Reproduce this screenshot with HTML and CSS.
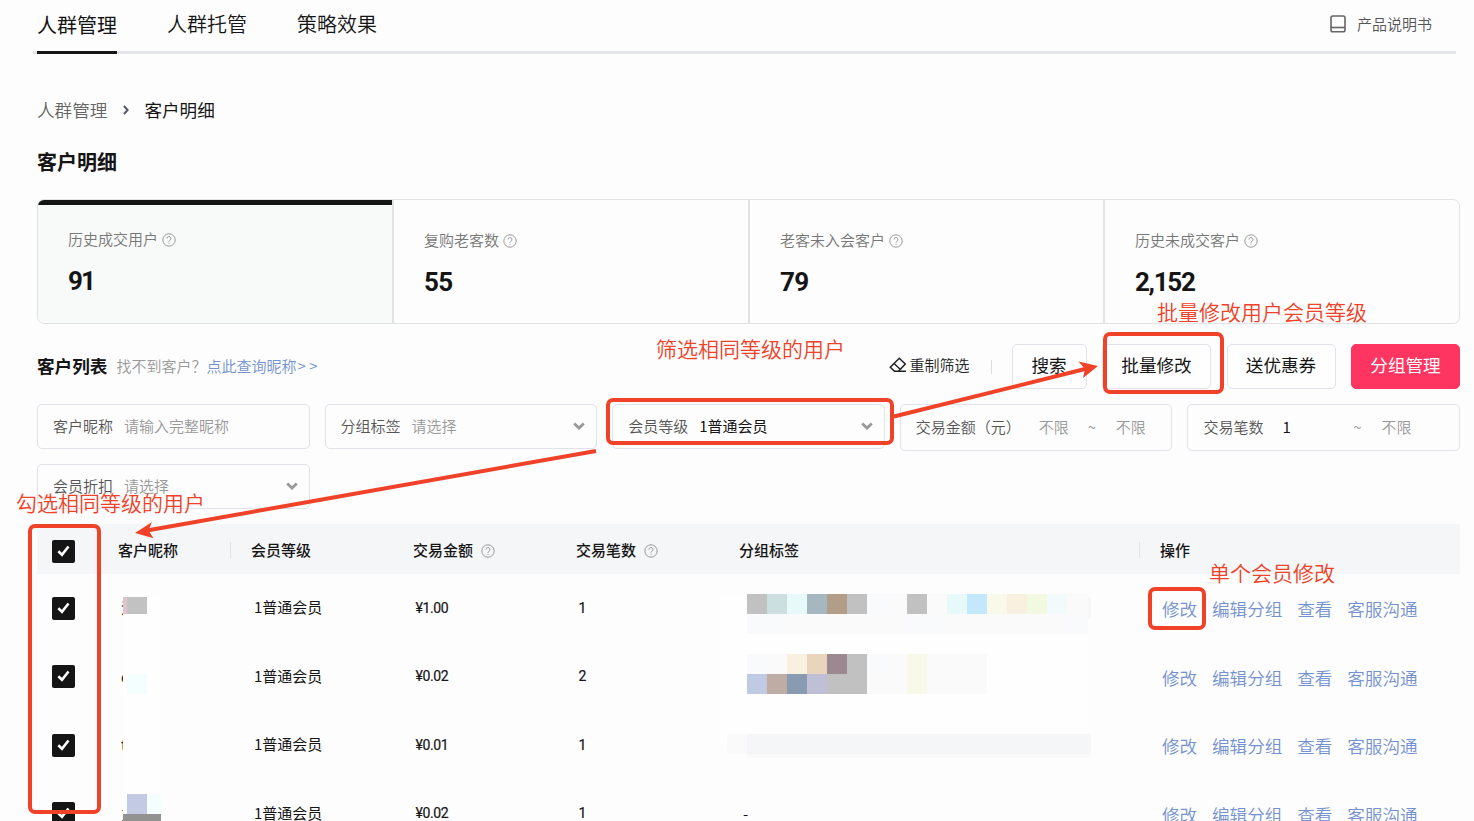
FILE: index.html
```html
<!DOCTYPE html>
<html lang="zh-CN">
<head>
<meta charset="utf-8">
<title>客户明细</title>
<link rel="stylesheet" href="styles.css">
</head>
<body>
<svg class="defs" width="0" height="0">
  <symbol id="help" viewBox="0 0 14 14"><circle cx="7" cy="7" r="6.2" fill="none" stroke="#999" stroke-width="1"/><path d="M5 5.6a2 2 0 1 1 2.9 1.7c-.6.4-.9.7-.9 1.3" fill="none" stroke="#999" stroke-width="1"/><path d="M6.5 9.7h1v1h-1z" fill="#999"/></symbol>
  <symbol id="down" viewBox="0 0 12 8"><path d="M1.2 1.4 6 6l4.800-4.600" fill="none" stroke="#999" stroke-width="2.800"/></symbol>
  <symbol id="tick" viewBox="0 0 23 23"><path d="M6.300 11.300l3.700 3.500 6.500-8.300" fill="none" stroke="#fff" stroke-width="2.600"/></symbol>
</svg>
<main class="page">
  <header class="tabs">
    <nav class="tab-list">
      <a class="tab active">人群管理</a>
      <a class="tab">人群托管</a>
      <a class="tab">策略效果</a>
    </nav>
    <a class="manual">
      <svg width="16" height="18" viewBox="0 0 16 18" fill="none" stroke="#666" stroke-width="1.600"><rect x="1" y="1" width="14" height="15.800" rx="1.800"/><path d="M1 12.500h14"/></svg>
      产品说明书
    </a>
  </header>

  <div class="crumbs">
    <span class="crumb-parent">人群管理</span>
    <svg width="6" height="10" viewBox="0 0 6 10"><path d="M1 1l3.600 4L1 9" fill="none" stroke="#555b66" stroke-width="2"/></svg>
    <span>客户明细</span>
  </div>
  <h1 class="title">客户明细</h1>

  <section class="stats">
    <div class="stat active"><div class="stat-label">历史成交用户<svg class="help"><use href="#help"/></svg></div><div class="stat-value">91</div></div>
    <div class="stat"><div class="stat-label">复购老客数<svg class="help"><use href="#help"/></svg></div><div class="stat-value">55</div></div>
    <div class="stat"><div class="stat-label">老客未入会客户<svg class="help"><use href="#help"/></svg></div><div class="stat-value">79</div></div>
    <div class="stat"><div class="stat-label">历史未成交客户<svg class="help"><use href="#help"/></svg></div><div class="stat-value">2,152</div></div>
  </section>

  <section class="toolbar">
    <h2 class="list-title">客户列表</h2>
    <span class="hint">找不到客户？<a class="link">点此查询昵称<span class="more">&gt;&gt;</span></a></span>
    <a class="reset">
      <svg width="18" height="16" viewBox="0 0 18 16" fill="none" stroke="#222" stroke-width="1.500"><path d="M10.300 1.300 16.300 7 9.500 14.300H5.500L1.300 10.200z"/><path d="M5 6.500l6.500 6M9 14.300h8"/></svg>
      重制筛选
    </a>
    <span class="sep"></span>
    <button class="btn btn-search">搜索</button>
    <button class="btn">批量修改</button>
    <button class="btn">送优惠券</button>
    <button class="btn primary">分组管理</button>
  </section>

  <section class="filters">
    <div class="field"><span class="name">客户昵称</span><span class="ph">请输入完整昵称</span></div>
    <div class="field"><span class="name">分组标签</span><span class="ph">请选择</span><svg class="down"><use href="#down"/></svg></div>
    <div class="field"><span class="name">会员等级</span><span class="val">1普通会员</span><svg class="down"><use href="#down"/></svg></div>
    <div class="field range amount"><span class="name">交易金额（元）</span><span class="ph from">不限</span><span class="tilde">~</span><span class="ph">不限</span></div>
    <div class="field range count"><span class="name">交易笔数</span><span class="val from">1</span><span class="tilde">~</span><span class="ph">不限</span></div>
    <div class="field"><span class="name">会员折扣</span><span class="ph">请选择</span><svg class="down"><use href="#down"/></svg></div>
  </section>

  <section class="table">
    <div class="row head">
      <div class="check"><svg class="box"><use href="#tick"/></svg></div>
      <div class="divided">客户昵称</div>
      <div>会员等级</div>
      <div>交易金额<svg class="help"><use href="#help"/></svg></div>
      <div>交易笔数<svg class="help"><use href="#help"/></svg></div>
      <div class="divided tags">分组标签</div>
      <div>操作</div>
    </div>
    <div class="row">
      <div class="check"><svg class="box"><use href="#tick"/></svg></div>
      <div class="nick"><span>潘</span></div><div class="level">1普通会员</div><div class="num">¥1.00</div><div class="num">1</div><div></div>
      <div class="ops"><a>修改</a><a>编辑分组</a><a>查看</a><a>客服沟通</a></div>
    </div>
    <div class="row">
      <div class="check"><svg class="box"><use href="#tick"/></svg></div>
      <div class="nick"><span>e</span></div><div class="level">1普通会员</div><div class="num">¥0.02</div><div class="num">2</div><div></div>
      <div class="ops"><a>修改</a><a>编辑分组</a><a>查看</a><a>客服沟通</a></div>
    </div>
    <div class="row">
      <div class="check"><svg class="box"><use href="#tick"/></svg></div>
      <div class="nick"><span>t</span></div><div class="level">1普通会员</div><div class="num">¥0.01</div><div class="num">1</div><div></div>
      <div class="ops"><a>修改</a><a>编辑分组</a><a>查看</a><a>客服沟通</a></div>
    </div>
    <div class="row">
      <div class="check"><svg class="box"><use href="#tick"/></svg></div>
      <div class="nick"><span>之</span></div><div class="level">1普通会员</div><div class="num">¥0.02</div><div class="num">1</div><div class="dash">-</div>
      <div class="ops"><a>修改</a><a>编辑分组</a><a>查看</a><a>客服沟通</a></div>
    </div>
  </section>
</main>

<svg class="overlay" width="1474" height="821" viewBox="0 0 1474 821">
  <g shape-rendering="crispEdges">
    <path fill="#fefefe" d="M123 597h38v224h-38zM720 594h368v150H720z"/>
    <path fill="#dcc5cf" d="M123 597h4v17h-4z"/><path fill="#c2c2c2" d="M127 597h20v17h-20z"/>
    <path fill="#f5fefe" d="M127 674h20v20h-20zM147 794h14v20h-14z"/>
    <path fill="#c2cbe3" d="M127 794h20v20h-20z"/><path fill="#929391" d="M123 814h38v7h-38z"/>
    <path fill="#fafafa" d="M747 614h341v20H747zM867 594h40v20h-40zM927 594h20v20h-20zM1067 594h21v20h-21zM747 654h40v20h-40zM867 654h120v40H867z"/>
    <path fill="#f8fafc" d="M747 614h40v20h-40zM907 614h40v20h-40zM1067 614h21v20h-21zM867 594h20v20h-20zM747 654h20v20h-20zM867 654h20v20h-20z"/>
    <path fill="#c1c1c1" d="M747 594h20v20h-20zM847 594h20v20h-20zM907 594h20v20h-20zM847 654h20v40h-20zM827 674h20v20h-20z"/>
    <path fill="#cbdfe1" d="M767 594h20v20h-20z"/><path fill="#e8f9f9" d="M787 594h20v20h-20zM947 594h20v20h-20z"/>
    <path fill="#a6b7bf" d="M807 594h20v20h-20z"/><path fill="#b29d88" d="M827 594h20v20h-20z"/>
    <path fill="#c3e7fb" d="M967 594h20v20h-20z"/><path fill="#f8f9e8" d="M987 594h20v20h-20zM907 654h20v40h-20z"/>
    <path fill="#f9f0df" d="M1007 594h20v20h-20z"/><path fill="#f1f9e1" d="M1027 594h20v20h-20z"/><path fill="#f2fafc" d="M1047 594h20v20h-20z"/>
    <path fill="#f9f1e0" d="M787 654h20v20h-20z"/><path fill="#e9d5bb" d="M807 654h20v20h-20z"/><path fill="#9c8891" d="M827 654h20v20h-20z"/>
    <path fill="#c0cae3" d="M747 674h20v20h-20z"/><path fill="#bfada5" d="M767 674h20v20h-20z"/><path fill="#889bb1" d="M787 674h20v20h-20z"/><path fill="#bfbfd5" d="M807 674h20v20h-20z"/>
    <path fill="#fafafa" d="M727 734h20v20h-20zM747 754h341v4H747z"/><path fill="#f5f6f8" d="M747 734h341v20H747z"/>
  </g>
  <path fill="#f7f7f8" d="M1088 596q3 1 3 5v13q0 4-3 5zM1088 733q3 1 3 5v14q0 4-3 5z"/>
  <g fill="none" stroke="#ef4229" stroke-width="4">
    <rect x="1105" y="334" width="117" height="58" rx="5"/>
    <rect x="608" y="400" width="284" height="43" rx="5"/>
    <rect x="30" y="526" width="69" height="286" rx="5"/>
    <rect x="1150" y="589" width="54" height="39" rx="5"/>
    <path d="M894 416.500 1086 368.800M596 451 147 530.500"/>
  </g>
  <path fill="#ef4229" d="M1098 366l-19.500-4.500 6.500 7.500-2 9zM135 533l17-11-3.500 8.500 5 7.700z"/>
</svg>
<span class="note note-filter">筛选相同等级的用户</span>
<span class="note note-batch">批量修改用户会员等级</span>
<span class="note note-check">勾选相同等级的用户</span>
<span class="note note-single">单个会员修改</span>
</body>
</html>
```
FILE: styles.css
```css
* { box-sizing: border-box; }
body {
  margin: 0;
  width: 1474px;
  height: 821px;
  overflow: hidden;
  position: relative;
  background: #fdfdfd;
  color: #151515;
  font: 350 15px/20px "Noto Sans CJK SC", sans-serif;
}
.defs { position: absolute; }
.page { height: 821px; padding: 0 14px 0 37px; overflow: hidden; display: flex; flex-direction: column; }
.page > * { flex-shrink: 0; }

.tabs { display: flex; justify-content: space-between; height: 54px; margin: 0 4px 0 -4px; padding: 0 24px 0 4px; border-bottom: 3px solid #e4e5ea; }
.tab-list { display: flex; gap: 50px; height: 54px; }
.tab { height: 54px; padding-top: 9px; font-size: 20px; line-height: 30px; }
.tab.active { padding-top: 10px; border-bottom: 3px solid #151515; font-weight: 400; }
.manual { display: flex; align-items: center; gap: 11px; height: 48px; color: #555; }

.crumbs { display: flex; align-items: center; height: 30px; margin-top: 41px; font-size: 17.600px; line-height: 30px; font-weight: 400; }
.crumbs svg { margin: 0 15.600px 0 15.400px; }
.crumb-parent { color: #666; font-weight: 350; }
.title { margin: 22px 0 0; font-size: 20px; line-height: 30px; font-weight: 700; }

.stats { display: grid; grid-template-columns: 354px 356px 355px 1fr; height: 125px; margin-top: 22px; border: 1px solid #e1e2e4; border-radius: 7px; overflow: hidden; }
.stat { padding: 30px 0 0 30px; border-left: 2px solid #e1e2e4; }
.stat.active { margin-top: -1px; border-left: 0; border-top: 6px solid #151515; background: #f8faf9; padding: 24px 0 0 30px; }
.stat-label { display: flex; align-items: center; gap: 4px; color: #777; }
.help { width: 14px; height: 14px; display: block; }
.stat-label .help { margin-top: 1px; }
.stat-value { margin-top: 16px; font: 700 26px/32px Roboto, sans-serif; letter-spacing: -0.6px; }
.stat.active .stat-value { letter-spacing: -2px; }
.stat:last-child .stat-value { letter-spacing: -1.300px; }

.toolbar { display: flex; align-items: center; height: 45px; margin-top: 20px; }
.list-title { margin: -1px 0 0; font-size: 17.600px; line-height: 30px; font-weight: 700; }
.hint { margin: -2px 0 0 9px; color: #999; }
.link { color: #7492cf; }
.more { margin-left: 1px; letter-spacing: 3.500px; }
.reset { display: flex; align-items: center; gap: 2px; margin: -3px 0 0 auto; color: #222; }
.sep { width: 1px; height: 14px; margin: 0 20px 0 21px; background: #ddd; }
.btn { width: 109px; height: 45px; margin-left: 15.500px; padding: 0 0 4px; border: 1px solid #e1e2ea; border-radius: 5px; background: #fefefe; color: #151515; font: 400 17.600px/26px "Noto Sans CJK SC", sans-serif; }
.btn-search { width: 75px; margin-left: 0; }
.primary { border-color: #ff3561; background: #ff3561; color: #fff; }

.filters { display: grid; grid-template-columns: repeat(5, 1fr); grid-template-rows: 45px 45px; gap: 15px; margin-top: 15px; }
.field { display: flex; align-items: center; height: 45px; padding: 0 11px 2px 15px; border: 1px solid #e1e2ea; border-radius: 5px; color: #999; }
.range { height: 47px; }
.name { color: #555; }
.ph, .val { margin-left: 11px; }
.val { color: #151515; font-weight: 400; }
.down { width: 12px; height: 8px; margin: 1px 0 0 auto; }
.tilde { width: 10px; text-align: center; }
.amount .from { margin-left: 18px; }
.amount .tilde { margin-left: 18px; }
.amount .tilde + .ph { margin-left: 19px; }
.count .from { width: 70px; margin-left: 19px; }
.count .tilde + .ph { margin-left: 19px; }

.table { margin-top: 15px; }
.row { display: grid; grid-template-columns: 81px 133px 162px 163px 164px 420px 300px; align-items: center; height: 68.500px; font-weight: 400; }
.head { height: 50px; background: #f5f6f8; font-weight: 500; font-size: 15px; }
.head > div { display: flex; align-items: center; gap: 8px; margin-top: 2px; }
.head .check { margin-top: 4px; }
.head .help { margin-top: 1px; }
.divided { height: 16px; margin-right: 20px; border-right: 1px solid #dfe1e6; }
.tags { margin-left: -1px; }
.check { padding-left: 15px; }
.box { display: block; width: 23px; height: 23px; border-radius: 2px; background: #151515; }
.nick { padding-left: 3px; }
.nick span { display: block; width: 2px; overflow: hidden; }
.level { padding: 0 0 2px 3px; }
.num { padding: 0 0 1px 2.500px; font: 400 14px/20px Roboto, sans-serif; letter-spacing: -0.4px; -webkit-text-stroke: 0.2px #151515; }
.dash { padding-left: 3px; }
.ops { display: flex; gap: 14.800px; padding: 2px 0 0 2px; color: #7492cf; font-size: 17.600px; line-height: 26px; font-weight: 350; }

.overlay { position: absolute; left: 0; top: 0; }
.note { position: absolute; color: #ef4229; font-size: 21px; line-height: 30px; white-space: nowrap; }
.note-filter { left: 656px; top: 333px; }
.note-batch { left: 1157px; top: 296px; }
.note-check { left: 16px; top: 487px; }
.note-single { left: 1209px; top: 557px; }
```
